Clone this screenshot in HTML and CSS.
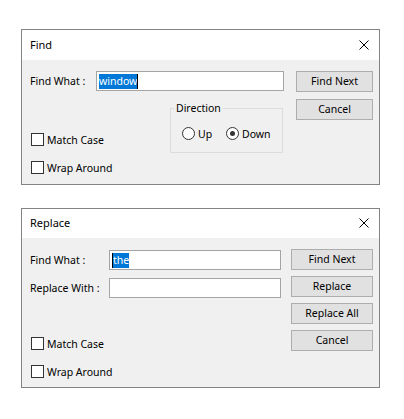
FILE: index.html
```html
<!DOCTYPE html>
<html lang="en">
<head>
<meta charset="utf-8">
<title>Find and Replace</title>
<link rel="stylesheet" href="styles.css">
</head>
<body>
<div class="page">
  <div class="dialog find">
    <div class="titlebar">
      <span class="title">Find</span>
      <svg class="close" width="10" height="10" viewBox="0 0 10 10"><path d="M0.5 0.5 L9.5 9.5 M9.5 0.5 L0.5 9.5" stroke="#000" stroke-width="1" fill="none"/></svg>
    </div>
    <div class="body">
      <div class="main">
        <div class="row">
          <span class="label">Find What :</span>
          <div class="field"><span class="sel">window</span><span class="caret"></span></div>
        </div>
        <div class="lower">
          <div class="checks">
            <div class="check"><span class="box"></span><span>Match Case</span></div>
            <div class="check"><span class="box"></span><span>Wrap Around</span></div>
          </div>
          <fieldset class="group">
            <legend>Direction</legend>
            <div class="radios">
              <div class="radio first"><span class="circle"></span><span>Up</span></div>
              <div class="radio"><span class="circle on"><span class="dot"></span></span><span>Down</span></div>
            </div>
          </fieldset>
        </div>
      </div>
      <div class="buttons">
        <div class="btn">Find Next</div>
        <div class="btn">Cancel</div>
      </div>
    </div>
  </div>

  <div class="dialog replace">
    <div class="titlebar">
      <span class="title">Replace</span>
      <svg class="close" width="10" height="10" viewBox="0 0 10 10"><path d="M0.5 0.5 L9.5 9.5 M9.5 0.5 L0.5 9.5" stroke="#000" stroke-width="1" fill="none"/></svg>
    </div>
    <div class="body">
      <div class="main">
        <div class="rows">
          <div class="row">
            <span class="label">Find What :</span>
            <div class="field"><span class="caret"></span><span class="sel">the</span></div>
          </div>
          <div class="row">
            <span class="label">Replace With :</span>
            <div class="field"></div>
          </div>
        </div>
        <div class="checks">
          <div class="check"><span class="box"></span><span>Match Case</span></div>
          <div class="check"><span class="box"></span><span>Wrap Around</span></div>
        </div>
      </div>
      <div class="buttons">
        <div class="btn">Find Next</div>
        <div class="btn">Replace</div>
        <div class="btn">Replace All</div>
        <div class="btn">Cancel</div>
      </div>
    </div>
  </div>
</div>
</body>
</html>
```
FILE: styles.css
```css
html, body {
  margin: 0;
  padding: 0;
  background: #fff;
}
body {
  font-family: "Noto Sans", "Open Sans", sans-serif;
  font-size: 10.5px;
  color: #000;
}
.page {
  display: flex;
  flex-direction: column;
  padding: 29px 0 0 21px;
  gap: 23px;
}
.dialog {
  box-sizing: border-box;
  width: 359px;
  border: 1px solid #838383;
  background: #f0f0f0;
}
.titlebar {
  height: 30px;
  background: #fff;
  display: flex;
  align-items: center;
  justify-content: space-between;
  padding: 0 10px 0 8px;
}
.replace .titlebar {
  height: 29px;
}
.title {
  font-size: 11px;
  line-height: 16px;
  padding-bottom: 1px;
}
.close {
  display: block;
  margin-bottom: 1px;
}
.body {
  display: flex;
  padding: 11px 0 0 8px;
  box-sizing: border-box;
}
.find .body { height: 124px; }
.replace .body { height: 149px; }
.main {
  display: flex;
  flex-direction: column;
}
.find .main { width: 266px; }
.replace .main { width: 261px; }
.row {
  display: flex;
  align-items: center;
  height: 20px;
}
.label {
  white-space: nowrap;
}
.find .label { width: 66px; }
.replace .label { width: 79px; }
.field {
  box-sizing: border-box;
  height: 20px;
  background: #fff;
  border: 1px solid #a5a5a5;
  display: flex;
  align-items: center;
  padding-left: 2px;
}
.find .field { width: 188px; }
.replace .field { width: 172px; }
.sel {
  background: #0078d7;
  color: #fff;
  line-height: 15px;
  height: 15px;
}
.caret {
  width: 1px;
  height: 15px;
  background: #000;
}
.rows {
  display: flex;
  flex-direction: column;
  gap: 8px;
  margin-top: 1px;
}
.lower {
  display: flex;
  align-items: flex-start;
  margin-top: 9px;
}
.checks {
  display: flex;
  flex-direction: column;
  gap: 13px;
  margin-left: 1px;
}
.find .checks {
  width: 139px;
  padding-top: 32px;
}
.replace .checks {
  margin-top: 38px;
}
.check {
  display: flex;
  align-items: center;
  height: 15px;
  gap: 3px;
  white-space: nowrap;
}
.box {
  box-sizing: border-box;
  width: 13px;
  height: 13px;
  border: 1px solid #333;
  background: #fff;
  flex: none;
}
.group {
  box-sizing: border-box;
  width: 113px;
  margin: 0;
  padding: 0 0 11px 0;
  border: 1px solid #dcdcdc;
  min-width: 0;
}
.group legend {
  margin-left: 3px;
  padding: 0 2px;
  line-height: 16px;
}
.radios {
  display: flex;
  align-items: center;
  height: 15px;
  padding: 10px 0 0 11px;
}
.radio {
  display: flex;
  align-items: center;
  gap: 3px;
}
.radio.first { width: 44px; }
.circle {
  box-sizing: border-box;
  width: 13px;
  height: 13px;
  border: 1px solid #333;
  border-radius: 50%;
  background: #fff;
  display: flex;
  align-items: center;
  justify-content: center;
  flex: none;
}
.dot {
  width: 5px;
  height: 5px;
  border-radius: 50%;
  background: #333;
}
.buttons {
  display: flex;
  flex-direction: column;
}
.find .buttons { gap: 7px; }
.replace .buttons { gap: 6px; }
.btn {
  box-sizing: border-box;
  height: 21px;
  border: 1px solid #adadad;
  background: #e1e1e1;
  text-align: center;
  line-height: 19px;
}
.find .btn { width: 77px; }
.replace .btn { width: 82px; }
```
